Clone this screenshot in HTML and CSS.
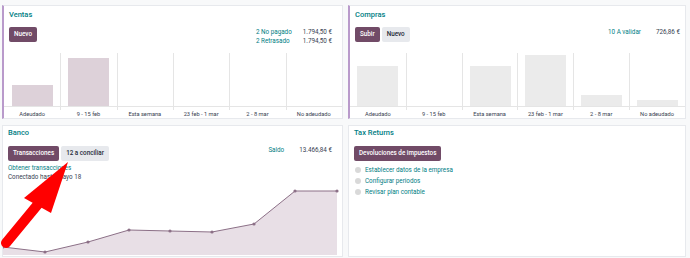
FILE: index.html
```html
<!DOCTYPE html>
<html lang="es">
<head>
  <meta charset="UTF-8">
  <meta name="viewport" content="width=device-width, initial-scale=1.0">
  <title>Contabilidad - Tablero</title>
  <link rel="stylesheet" href="styles.css">
</head>
<body>
  <div class="dash">
    <!-- Ventas -->
    <section class="card card-accent">
      <div class="card-top">
        <h3 class="card-title">Ventas</h3>
        <div class="card-head">
          <div class="btns"><span class="btn btn-primary">Nuevo</span></div>
          <div class="stats">
            <span class="stat-lbl">2 No pagado</span><span class="stat-val">1.794,50 €</span>
            <span class="stat-lbl">2 Retrasado</span><span class="stat-val">1.794,50 €</span>
          </div>
        </div>
      </div>
      <div class="bars bars-sale">
        <div class="col"><div class="area"><div class="plot"><span class="bar" style="height:21px"></span></div></div><span class="lbl">Adeudado</span></div>
        <div class="col"><div class="area"><div class="plot"><span class="bar" style="height:48px"></span></div></div><span class="lbl">9 - 15 feb</span></div>
        <div class="col"><div class="area"><div class="plot"></div></div><span class="lbl">Esta semana</span></div>
        <div class="col"><div class="area"><div class="plot"></div></div><span class="lbl">23 feb - 1 mar</span></div>
        <div class="col"><div class="area"><div class="plot"></div></div><span class="lbl">2 - 8 mar</span></div>
        <div class="col"><div class="area"><div class="plot"></div></div><span class="lbl">No adeudado</span></div>
      </div>
    </section>

    <!-- Compras -->
    <section class="card card-accent card-right">
      <div class="card-top">
        <h3 class="card-title">Compras</h3>
        <div class="card-head">
          <div class="btns"><span class="btn btn-primary">Subir</span><span class="btn btn-light">Nuevo</span></div>
          <div class="stats">
            <span class="stat-lbl">10 A validar</span><span class="stat-val">726,86 €</span>
          </div>
        </div>
      </div>
      <div class="bars bars-purchase">
        <div class="col"><div class="area"><div class="plot"><span class="bar" style="height:40px"></span></div></div><span class="lbl">Adeudado</span></div>
        <div class="col"><div class="area"><div class="plot"></div></div><span class="lbl">9 - 15 feb</span></div>
        <div class="col"><div class="area"><div class="plot"><span class="bar" style="height:40px"></span></div></div><span class="lbl">Esta semana</span></div>
        <div class="col"><div class="area"><div class="plot"><span class="bar" style="height:51px"></span></div></div><span class="lbl">23 feb - 1 mar</span></div>
        <div class="col"><div class="area"><div class="plot"><span class="bar" style="height:11px"></span></div></div><span class="lbl">2 - 8 mar</span></div>
        <div class="col"><div class="area"><div class="plot"><span class="bar" style="height:6px"></span></div></div><span class="lbl">No adeudado</span></div>
      </div>
    </section>

    <!-- Banco -->
    <section class="card card-bank">
      <div class="card-top">
        <h3 class="card-title">Banco</h3>
        <div class="card-head">
          <div class="btns"><span class="btn btn-primary">Transacciones</span><span class="btn btn-light">12 a conciliar</span></div>
          <div class="stats">
            <span class="stat-lbl">Saldo</span><span class="stat-val">13.466,84 €</span>
          </div>
        </div>
        <a class="link-line">Obtener transacciones</a>
        <p class="info-line">Conectado hasta mayo 18</p>
      </div>
      <svg class="line-chart" viewBox="0 0 338 69" width="338" height="69">
        <polygon class="area-fill" points="0,61 42,66 85,56 126,44 167,45 209,46 251,38 292,5 334,5 334,69 0,69"/>
        <polyline class="line" points="0,61 42,66 85,56 126,44 167,45 209,46 251,38 292,5 334,5"/>
        <g class="dots">
          <circle cx="0" cy="61" r="1.6"/><circle cx="42" cy="66" r="1.6"/><circle cx="85" cy="56" r="1.6"/>
          <circle cx="126" cy="44" r="1.6"/><circle cx="167" cy="45" r="1.6"/><circle cx="209" cy="46" r="1.6"/>
          <circle cx="251" cy="38" r="1.6"/><circle cx="292" cy="5" r="1.6"/><circle cx="334" cy="5" r="1.6"/>
        </g>
      </svg>
    </section>

    <!-- Tax Returns -->
    <section class="card card-right card-tax">
      <div class="card-top">
        <h3 class="card-title">Tax Returns</h3>
        <div class="card-head">
          <div class="btns"><span class="btn btn-primary">Devoluciones de impuestos</span></div>
        </div>
        <ul class="steps">
          <li>Establecer datos de la empresa</li>
          <li>Configurar periodos</li>
          <li>Revisar plan contable</li>
        </ul>
      </div>
    </section>

    <!-- flecha roja de anotacion -->
    <svg class="arrow" width="690" height="258" viewBox="0 0 690 258">
      <line x1="6" y1="243" x2="39" y2="203" stroke="#ff0000" stroke-width="10" stroke-linecap="round"/>
      <polygon points="68,162 24,198 51,213" fill="#ff0000"/>
    </svg>
  </div>
</body>
</html>
```

FILE: styles.css
```css
* {margin:0; padding:0; box-sizing:border-box;}
body{
  background:#f8f9fa;
  font-family: Roboto, "Noto Sans", sans-serif;
  color:#374151;
  font-size:6.3px;
}
.dash{
  position:relative;
  display:grid;
  grid-template-columns: 341px 338px;
  grid-template-rows: 114px 132px;
  column-gap:5px;
  row-gap:6px;
  padding:5px 4px 0 2px;
  height:258px;
}

.card{
  background:#fff;
  border:1px solid #e7e9ed;
  display:flex;
  flex-direction:column;
  overflow:hidden;
}
.card-accent{border-left:2px solid #b99acb;}
.card-top{padding:4px 10px 11px 5px;}
.card-right .card-top{padding-right:5px;}
.card-bank .card-top, .card-tax .card-top{padding-top:2px; padding-bottom:0;}

.card-title{
  font-size:7.5px;
  line-height:10px;
  font-weight:500;
  color:#017e84;
  margin-bottom:7px;
}
.card-bank .card-title, .card-tax .card-title{margin-bottom:8px;}

.card-head{
  display:flex;
  justify-content:space-between;
  align-items:flex-start;
  height:15px;
}
.btns{display:flex; gap:2px;}
.btn{
  display:inline-block;
  height:15px;
  line-height:15px;
  padding:0 5px;
  border-radius:2px;
  font-weight:500;
  font-size:6.3px;
}
.btn-primary{background:#714b67; color:#fff;}
.btn-light{background:#e7e9ed; color:#1f2937;}

.stats{
  display:grid;
  grid-template-columns:auto auto;
  column-gap:11px;
  line-height:9px;
  margin-top:1px;
}
.card-right .stats{column-gap:15px;}
.card-bank .stats{column-gap:15px; margin-top:0;}
.stat-lbl{color:#017e84;}
.stat-val{text-align:right; color:#374151;}

/* graficos de barras */
.bars{display:flex; flex:1;}
.bars .col{flex:1; display:flex; flex-direction:column;}
.bars .col:first-child .area{border-left:none;}
.area{border-left:1px solid #e5e5e5; padding-bottom:3px;}
.plot{
  height:54px;
  border-bottom:1px solid #e5e5e5;
  display:flex;
  align-items:flex-end;
  justify-content:center;
}
.bar{display:block; width:41px;}
.bars-sale .bar{background:#ddd1d9;}
.bars-purchase .bar{background:#ebebeb;}
.lbl{
  text-align:center;
  font-size:5.7px;
  line-height:8px;
  color:#374151;
}

/* banco */
.link-line{
  display:block;
  margin-top:2.5px;
  line-height:9px;
  color:#017e84;
}
.info-line{line-height:9px; color:#374151;}
.line-chart{display:block; margin-top:4.5px;}
.area-fill{fill:#e8dfe6;}
.line{fill:none; stroke:#8c7087; stroke-width:1;}
.dots circle{fill:#8c7087;}

/* tax */
.steps{list-style:none; margin-top:3.5px;}
.steps li{
  display:flex;
  align-items:center;
  gap:4px;
  line-height:11px;
  color:#017e84;
}
.steps li::before{
  content:"";
  width:6px; height:6px;
  border-radius:50%;
  background:#d9d9d9;
  margin-left:1px;
}

.arrow{
  position:absolute;
  left:0; top:0;
  pointer-events:none;
}
```
